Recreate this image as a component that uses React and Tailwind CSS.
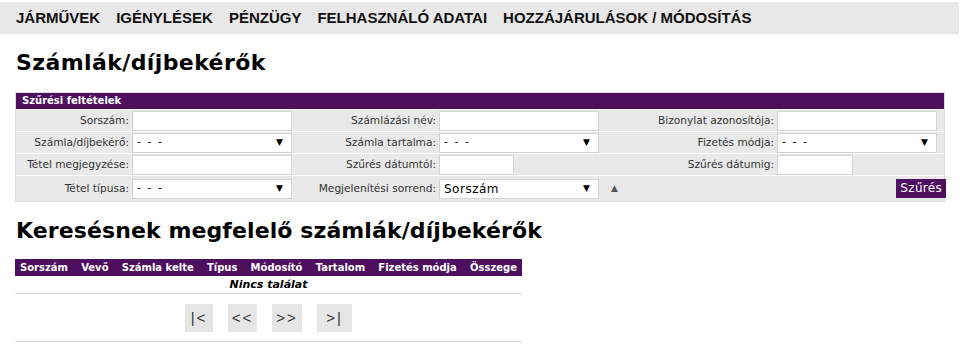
import React from 'react'

const NAV = ['JÁRMŰVEK', 'IGÉNYLÉSEK', 'PÉNZÜGY', 'FELHASZNÁLÓ ADATAI', 'HOZZÁJÁRULÁSOK / MÓDOSÍTÁS']
const COLS = ['Sorszám', 'Vevő', 'Számla kelte', 'Típus', 'Módosító', 'Tartalom', 'Fizetés módja', 'Összege']
const PAGER = [
  { t: '|<', w: 'w-[28px]' },
  { t: '<<', w: 'w-[29px]' },
  { t: '>>', w: 'w-[30px]' },
  { t: '>|', w: 'w-[35px]' },
]

function Input({ w = 'w-[160px]' }) {
  return <div className={`${w} h-[20px] bg-white border border-[#d4d4d4]`} />
}

function Select({ w = 'w-[160px]', value = '- - -', big }) {
  return (
    <div className={`${w} h-[20px] bg-white border border-[#d4d4d4] flex items-center justify-between pl-1 pr-2`}>
      <span className={big ? 'text-[12px] tracking-[0.5px]' : 'text-[11px] tracking-[1.5px]'}>{value}</span>
      <span className="text-[9px]">▼</span>
    </div>
  )
}

function Label({ children, w }) {
  return <div className={`${w} text-right pr-[3px] text-[10.6px] text-[#333]`}>{children}</div>
}

function Row({ children, h = 'h-[22px]' }) {
  return <div className={`flex items-center ${h} border-t border-white`}>{children}</div>
}

export default function App() {
  return (
    <div className="w-[962px] h-[351px] bg-white text-black overflow-hidden" style={{ fontFamily: '"DejaVu Sans", Verdana, sans-serif' }}>
      {/* Nav */}
      <div className="mt-[2px] h-[32px] bg-[#e8e8e8] flex items-center gap-[16px] px-[16px] mr-[3px]">
        {NAV.map(n => (
          <span key={n} className="font-bold text-[15px] text-[#111]" style={{ fontFamily: '"Liberation Sans", Arial, sans-serif' }}>{n}</span>
        ))}
      </div>

      <h1 className="ml-[16px] mt-[16px] text-[22px] font-bold leading-[26px] tracking-[0.4px]">Számlák/díjbekérők</h1>

      {/* Filter box */}
      <div className="mx-[15px] mt-[16px] w-[930px] bg-[#e9e9e9] border border-[#dcdcdc]">
        <div className="h-[16px] bg-[#4f0f5f] text-white text-[10px] font-bold pl-[6px] leading-[16px]">Szűrési feltételek</div>
        <Row>
          <Label w="w-[116px]">Sorszám:</Label><Input />
          <Label w="w-[147px]">Számlázási név:</Label><Input />
          <Label w="w-[178px]">Bizonylat azonosítója:</Label><Input />
        </Row>
        <Row>
          <Label w="w-[116px]">Számla/díjbekérő:</Label><Select />
          <Label w="w-[147px]">Számla tartalma:</Label><Select />
          <Label w="w-[178px]">Fizetés módja:</Label><Select />
        </Row>
        <Row>
          <Label w="w-[116px]">Tétel megjegyzése:</Label><Input />
          <Label w="w-[147px]">Szűrés dátumtól:</Label><Input w="w-[75px]" />
          <Label w="w-[263px]">Szűrés dátumig:</Label><Input w="w-[76px]" />
        </Row>
        <Row h="h-[26px]">
          <Label w="w-[116px]">Tétel típusa:</Label><Select />
          <Label w="w-[147px]">Megjelenítési sorrend:</Label><Select value="Sorszám" big />
          <span className="ml-[12px] text-[9px] text-[#555]">▲</span>
          <div className="ml-auto mr-[-2px] h-[19px] px-[4px] bg-[#4f0f5f] text-white text-[12px] leading-[19px] tracking-[0.3px]">Szűrés</div>
        </Row>
      </div>

      <h2 className="ml-[16px] mt-[16px] text-[22px] font-bold leading-[26px] tracking-[0.1px]">Keresésnek megfelelő számlák/díjbekérők</h2>

      {/* Results */}
      <div className="ml-[15px] mt-[15px] w-[507px]">
        <div className="h-[17px] bg-[#4f0f5f] flex items-center justify-between px-[5px]">
          {COLS.map(c => (
            <span key={c} className="text-white text-[10px] font-bold">{c}</span>
          ))}
        </div>
        <div className="h-[18px] text-center text-[11px] font-bold italic leading-[18px] border-b border-[#ddd]">Nincs találat</div>
        <div className="flex justify-center gap-[15px] pt-[10px] pb-[9px] border-b border-[#ddd]">
          {PAGER.map(b => (
            <div key={b.t} className={`${b.w} h-[28px] bg-[#e6e6e6] text-[15px] text-[#333] leading-[28px] text-center tracking-[2px]`} style={{ fontFamily: '"Liberation Sans", Arial, sans-serif' }}>{b.t}</div>
          ))}
        </div>
      </div>
    </div>
  )
}
